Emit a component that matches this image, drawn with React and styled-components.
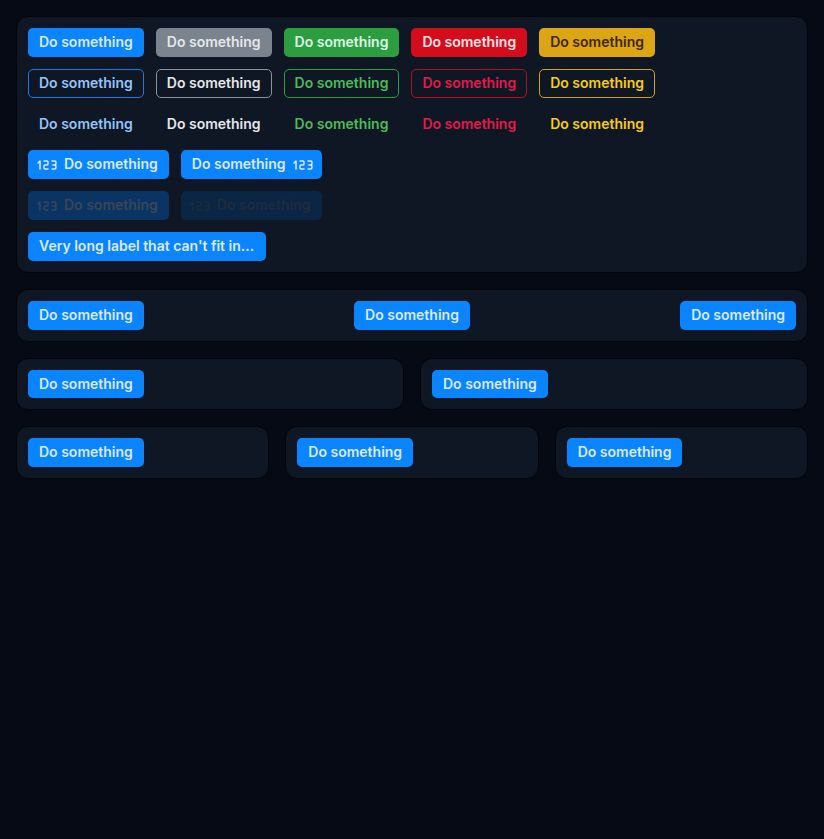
import React from "react";
import styled, { createGlobalStyle, css } from "styled-components";
import { TbNumber123 } from "react-icons/tb";

const GlobalStyle = createGlobalStyle`
  html, body {
    margin: 0;
    padding: 0;
    background: #050a14;
    min-height: 100%;
  }
  body {
    font-family: Inter, "Noto Sans", sans-serif;
  }
`;

const palette = {
  primary: { bg: "#0a84ff", fg: "#dbeafe", line: "#1d7be0", soft: "#93c5fd" },
  gray: { bg: "#7b838e", fg: "#e5e7eb", line: "#8b929c", soft: "#e5e7eb" },
  green: { bg: "#2c9e40", fg: "#dcfce7", line: "#24a03a", soft: "#4cbb5a" },
  red: { bg: "#d30d1c", fg: "#ffe4e6", line: "#b5101d", soft: "#e6194b" },
  yellow: { bg: "#dba514", fg: "#3d2600", line: "#d4a017", soft: "#facc15" },
};

const tones = ["primary", "gray", "green", "red", "yellow"];

export default function App() {
  return (
    <>
      <GlobalStyle />
      <Page>
        <Panel>
          <Row>
            {tones.map((t) => (
              <Button key={t} $tone={t}>Do something</Button>
            ))}
          </Row>
          <Row>
            {tones.map((t) => (
              <Button key={t} $tone={t} $variant="outline">Do something</Button>
            ))}
          </Row>
          <Row>
            {tones.map((t) => (
              <Button key={t} $tone={t} $variant="text">Do something</Button>
            ))}
          </Row>
          <Row>
            <Button $tone="primary" $icon="left">
              <TbNumber123 size={24} />
              Do something
            </Button>
            <Button $tone="primary" $icon="right">
              Do something
              <TbNumber123 size={24} />
            </Button>
          </Row>
          <Row>
            <Button $tone="primary" $icon="left" $disabled="dim">
              <TbNumber123 size={24} />
              Do something
            </Button>
            <Button $tone="primary" $icon="left" $disabled="faint">
              <TbNumber123 size={24} />
              Do something
            </Button>
          </Row>
          <Row>
            <Button $tone="primary" $truncate>
              <Label>Very long label that can't fit in a single button at all</Label>
            </Button>
          </Row>
        </Panel>

        <Panel $spread>
          <Button $tone="primary">Do something</Button>
          <Button $tone="primary">Do something</Button>
          <Button $tone="primary">Do something</Button>
        </Panel>

        <Columns $count={2}>
          <Panel>
            <Row>
              <Button $tone="primary">Do something</Button>
            </Row>
          </Panel>
          <Panel>
            <Row>
              <Button $tone="primary">Do something</Button>
            </Row>
          </Panel>
        </Columns>

        <Columns $count={3}>
          <Panel>
            <Row>
              <Button $tone="primary">Do something</Button>
            </Row>
          </Panel>
          <Panel>
            <Row>
              <Button $tone="primary">Do something</Button>
            </Row>
          </Panel>
          <Panel>
            <Row>
              <Button $tone="primary">Do something</Button>
            </Row>
          </Panel>
        </Columns>
      </Page>
    </>
  );
}

const Page = styled.div`
  display: flex;
  flex-direction: column;
  gap: 16px;
  padding: 16px;
  min-height: 100vh;
  box-sizing: border-box;
  background: #050a14;
`;

const Panel = styled.div`
  background: #0e1723;
  border: 1px solid #02050a;
  border-radius: 12px;
  padding: 11px;
  display: flex;
  flex-direction: ${(p) => (p.$spread ? "row" : "column")};
  justify-content: ${(p) => (p.$spread ? "space-between" : "flex-start")};
  gap: 12px;
  min-width: 0;
`;

const Columns = styled.div`
  display: grid;
  grid-template-columns: repeat(${(p) => p.$count}, 1fr);
  gap: 16px;
`;

const Row = styled.div`
  display: flex;
  gap: 12px;
  align-items: center;
`;

const Label = styled.span`
  overflow: hidden;
  text-overflow: ellipsis;
  white-space: nowrap;
  min-width: 0;
`;

const Button = styled.button`
  display: inline-flex;
  align-items: center;
  gap: 5px;
  box-sizing: border-box;
  height: 28.8px;
  padding: 0 10px;
  border-radius: 5px;
  font-family: Inter, "Noto Sans", sans-serif;
  font-size: 14px;
  font-weight: 600;
  line-height: 1.2;
  white-space: nowrap;
  cursor: pointer;
  flex: none;
  border: 1px solid transparent;
  background: ${(p) => palette[p.$tone].bg};
  color: ${(p) => palette[p.$tone].fg};

  ${(p) => p.$icon === "left" && css`padding-left: 6px;`}
  ${(p) => p.$icon === "right" && css`padding-right: 6px;`}

  ${(p) =>
    p.$variant === "outline" &&
    css`
      background: transparent;
      border-color: ${palette[p.$tone].line};
      color: ${palette[p.$tone].soft};
    `}

  ${(p) =>
    p.$variant === "text" &&
    css`
      background: transparent;
      color: ${palette[p.$tone].soft};
    `}

  ${(p) =>
    p.$disabled === "dim" &&
    css`
      background: #0a3463;
      color: #3a4657;
      cursor: default;
    `}

  ${(p) =>
    p.$disabled === "faint" &&
    css`
      background: #0b2544;
      color: #1f2c3d;
      cursor: default;
    `}

  ${(p) =>
    p.$truncate &&
    css`
      max-width: 238px;
    `}

  svg {
    flex: none;
    stroke-width: 1.5;
  }
`;
